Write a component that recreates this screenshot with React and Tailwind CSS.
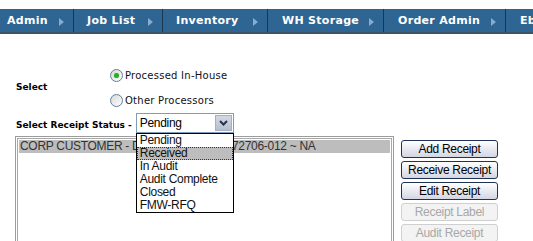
import React from "react";

const navItems = [
  { label: "Admin", w: "w-[74px]", pl: "pl-[7px]" },
  { label: "Job List", w: "w-[89px]", pl: "pl-[13px]" },
  { label: "Inventory", w: "w-[105px]", pl: "pl-[13px]" },
  { label: "WH Storage", w: "w-[116px]", pl: "pl-[14px]" },
  { label: "Order Admin", w: "w-[122px]", pl: "pl-[14px]" },
];

const statuses = ["Pending", "Received", "In Audit", "Audit Complete", "Closed", "FMW-RFQ"];

const buttons = [
  { label: "Add Receipt", on: true },
  { label: "Receive Receipt", on: true },
  { label: "Edit Receipt", on: true },
  { label: "Receipt Label", on: false },
  { label: "Audit Receipt", on: false },
];

function Radio({ checked }) {
  return (
    <span className="w-[13px] h-[13px] rounded-full border border-[#5f7f9f] bg-gradient-to-br from-[#d8d8d4] to-white flex items-center justify-center shrink-0">
      {checked && <span className="w-[5px] h-[5px] rounded-full bg-[#2aac2a] shadow-[0_0_1px_#6fd26f]" />}
    </span>
  );
}

export default function App() {
  return (
    <div className="w-[533px] h-[241px] overflow-hidden bg-white pt-[9px]">
      <nav className="flex h-[25px] bg-[#2e6592] border-b-2 border-[#3d5263] text-white font-bold text-[11px] tracking-[0.3px] whitespace-nowrap font-['DejaVu_Sans',sans-serif]">
        {navItems.map(n => (
          <div key={n.label} className={`${n.w} ${n.pl} shrink-0 flex items-center justify-between pr-[9px] pt-[2px] border-r border-[#1a3651]`}>
            <span>{n.label}</span>
            <span className="border-y-[4px] border-y-transparent border-l-[5px] border-l-[#86acd0]" />
          </div>
        ))}
        <div className="pl-[14px] pt-[2px] flex items-center shrink-0">Ebay Admin</div>
      </nav>

      <div className="pl-[15px] pt-[29px]">
        <div className="flex">
          <div className="w-[95px] pl-[1px] flex items-center font-bold text-[9px] font-['DejaVu_Sans',sans-serif]">Select</div>
          <div className="flex flex-col text-[10px] tracking-[0.25px] text-[#111] font-['DejaVu_Sans',sans-serif]">
            <label className="h-[25px] flex items-center gap-[2px]"><Radio checked /> Processed In-House</label>
            <label className="h-[25px] flex items-center gap-[2px]"><Radio /> Other Processors</label>
          </div>
        </div>

        <div className="flex h-[20px] gap-[5px]">
          <div className="pl-[1px] pt-[6px] font-bold text-[9px] font-['DejaVu_Sans',sans-serif] whitespace-nowrap">Select Receipt Status -</div>
          <div className="relative w-[98px] h-[20px] ml-[-1px] z-10 font-['Liberation_Sans',sans-serif] text-[12px] tracking-[-0.3px]">
            <div className="h-full border border-[#7f9db9] bg-white flex items-center justify-between pl-[3px] pr-[1px]">
              <span>Pending</span>
              <span className="w-[17px] h-[16px] bg-gradient-to-b from-[#d3d9e4] to-[#b6bfcf] border border-[#a6b0c2] flex items-center justify-center">
                <svg width="9" height="6" viewBox="0 0 9 6"><path d="M1 1l3.5 3.5L8 1" fill="none" stroke="#26334d" strokeWidth="2" /></svg>
              </span>
            </div>
            <div className="absolute left-0 top-[20px] w-[98px] border border-black bg-white">
              {statuses.map(s => (
                <div key={s} className={`h-[13px] leading-[11px] pl-[2px] text-[#111] ${s === "Received" ? "bg-[#bdbdbd] border border-dotted border-[#333]" : "border border-transparent"}`}>{s}</div>
              ))}
            </div>
          </div>
        </div>

        <div className="flex mt-[3px] font-['Liberation_Sans',sans-serif] text-[12px] tracking-[-0.3px]">
          <div className="w-[379px] h-[120px] shrink-0 border border-[#9c9c9c] p-[1px]">
            <div className="h-full border border-[#a8a8a8] px-[1px] pt-[1px]">
              <div className="h-[13px] leading-[13px] bg-[#bdbdbd] text-[#333] pl-[1px] whitespace-nowrap overflow-hidden">
                <span className="inline-block w-[212px] overflow-hidden align-top">CORP CUSTOMER - DATA SERVICES - 00</span>72706-012 ~ NA
              </div>
            </div>
          </div>
          <div className="ml-[7px] mt-[4px] flex flex-col gap-[3px]">
            {buttons.map(b => (
              <button key={b.label} className={`w-[97px] h-[18px] rounded-[3px] text-[12px] leading-none ${b.on ? "border border-[#1f3358] bg-gradient-to-b from-white to-[#d3d6e3] text-black" : "border border-[#cfcfcf] bg-[#f3f3f3] text-[#a8a8a8]"}`}>
                {b.label}
              </button>
            ))}
          </div>
        </div>
      </div>
    </div>
  );
}
